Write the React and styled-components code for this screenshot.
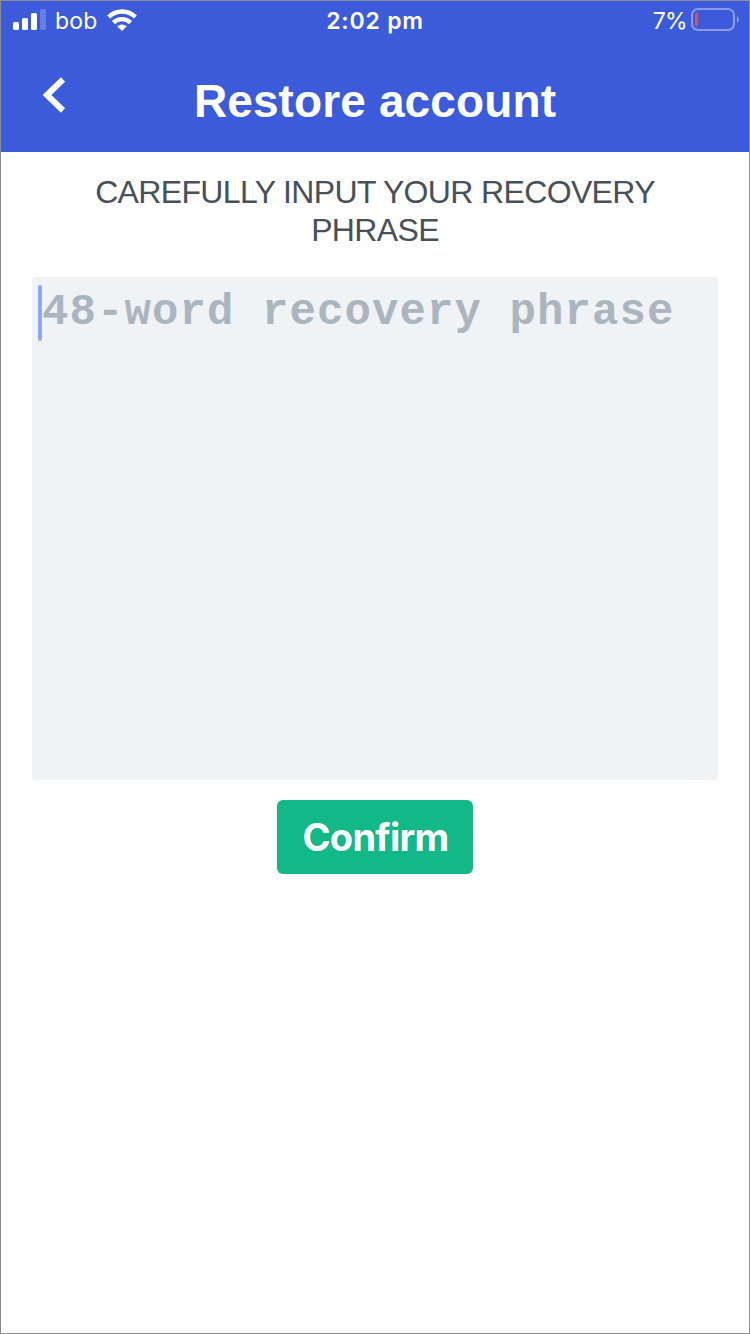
import React from 'react';
import styled, { createGlobalStyle } from 'styled-components';

const Global = createGlobalStyle`
  *{box-sizing:border-box}
  body{margin:0;background:#fefefe}
`;
const Screen = styled.main`
  width:750px;height:1334px;border:1px solid #8c8c8c;background:#fefefe;overflow:hidden;
  font-family:"Liberation Sans",Arial,sans-serif;
`;
const Header = styled.header`background:#3b5bdb;color:#fff;height:151px;`;
const StatusBar = styled.div`
  display:grid;grid-template-columns:1fr auto 1fr;align-items:center;height:38px;padding:0 9px 0 12px;
  font-family:Inter,sans-serif;font-size:23px;
`;
const StatusGroup = styled.div`
  display:flex;align-items:center;gap:${p => p.$gap}px;justify-content:${p => p.$end ? 'flex-end' : 'flex-start'};
`;
const SignalIcon = styled.svg`margin-bottom:2px;`;
const Time = styled.span`font-weight:600;letter-spacing:.8px;margin:1px 3px 0 0;`;
const Carrier = styled.span`letter-spacing:.2px;margin-top:1px;`;
const Percent = styled.span`letter-spacing:-.7px;margin-top:1px;`;
const TitleBar = styled.div`
  display:grid;grid-template-columns:106px 1fr 106px;align-items:center;height:113px;
`;
const Back = styled.button`
  border:0;background:none;padding:0 0 2px 40px;display:flex;color:inherit;
`;
const Title = styled.h1`margin:10px 0 0;text-align:center;font-size:46px;line-height:54px;letter-spacing:.12px;white-space:nowrap;`;
const Content = styled.section`display:flex;flex-direction:column;align-items:center;padding:21px 31px;`;
const Instruction = styled.p`
  margin:0 0 28px;width:600px;text-align:center;color:#495057;font-size:32px;line-height:38px;letter-spacing:-.65px;
`;
const PhraseField = styled.div`
  width:686px;height:503px;background:#f0f3f5;border-radius:4px;display:flex;align-items:flex-start;padding:8px 6px;
`;
const Caret = styled.span`width:4px;height:56px;border-radius:2px;background:#91a7ff;flex:none;`;
const Placeholder = styled.span`
  font:bold 44px/54px "Liberation Mono",monospace;color:#abb5bd;white-space:nowrap;letter-spacing:1.1px;
`;
const Confirm = styled.button`
  margin-top:20px;width:196px;height:74px;border:0;border-radius:6px;background:#12b886;color:#fff;
  font:700 38px/75px Inter,sans-serif;letter-spacing:-.75px;padding:0 0 0 1px;
`;

export default function App() {
  return <><Global /><Screen>
    <Header>
      <StatusBar>
        <StatusGroup $gap={9}>
          <SignalIcon width="33" height="21" viewBox="0 0 33 21" fill="#fff">
            <rect y="13" width="6" height="8" rx="1.5" /><rect x="9" y="9" width="6" height="12" rx="1.5" />
            <rect x="18" y="4" width="6" height="17" rx="1.5" /><rect x="27" width="6" height="21" rx="1.5" opacity=".22" />
          </SignalIcon>
          <Carrier>bob</Carrier>
          <svg width="30" height="22" viewBox="0 0 30 22" fill="none" stroke="#fff" strokeWidth="4.4">
            <path d="M1.6 8a19.2 19.2 0 0 1 26.8 0M6.5 13.6a12.2 12.2 0 0 1 17 0" />
            <path d="M15 22l-4.8-4.7a7 7 0 0 1 9.6 0z" fill="#fff" stroke="none" />
          </svg>
        </StatusGroup>
        <Time>2:02 pm</Time>
        <StatusGroup $gap={4} $end>
          <Percent>7%</Percent>
          <svg width="49" height="24" viewBox="0 0 49 24" fill="none">
            <rect x="1" y="1" width="42" height="21" rx="6" stroke="#fff" strokeOpacity=".4" strokeWidth="2" />
            <rect x="4" y="5" width="3" height="13" rx="1" fill="#ff453a" />
            <path d="M46 8q3.5 3.5 0 7z" fill="#fff" opacity=".5" />
          </svg>
        </StatusGroup>
      </StatusBar>
      <TitleBar>
        <Back aria-label="Back"><svg width="25" height="36" viewBox="0 0 25 36" fill="none" stroke="currentColor" strokeWidth="6"><path d="M22 2.5 6 18l16 15.5" /></svg></Back>
        <Title>Restore account</Title>
      </TitleBar>
    </Header>
    <Content>
      <Instruction>CAREFULLY INPUT YOUR RECOVERY PHRASE</Instruction>
      <PhraseField role="textbox" aria-multiline="true"><Caret /><Placeholder>48-word recovery phrase</Placeholder></PhraseField>
      <Confirm>Confirm</Confirm>
    </Content>
  </Screen></>;
}
